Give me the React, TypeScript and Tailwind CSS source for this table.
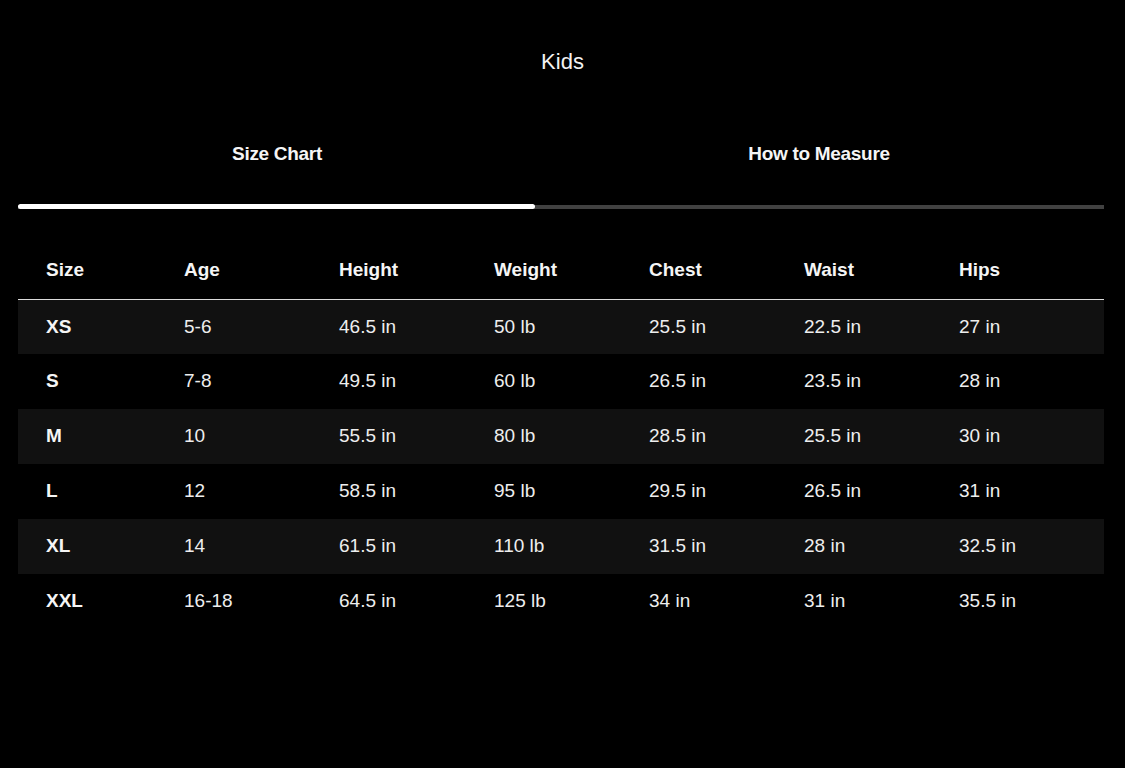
import React, { useState } from 'react'

type Row = {
    size: string
    age: string
    height: string
    weight: string
    chest: string
    waist: string
    hips: string
}

const rows: Row[] = [
    { size: 'XS', age: '5-6', height: '46.5 in', weight: '50 lb', chest: '25.5 in', waist: '22.5 in', hips: '27 in' },
    { size: 'S', age: '7-8', height: '49.5 in', weight: '60 lb', chest: '26.5 in', waist: '23.5 in', hips: '28 in' },
    { size: 'M', age: '10', height: '55.5 in', weight: '80 lb', chest: '28.5 in', waist: '25.5 in', hips: '30 in' },
    { size: 'L', age: '12', height: '58.5 in', weight: '95 lb', chest: '29.5 in', waist: '26.5 in', hips: '31 in' },
    { size: 'XL', age: '14', height: '61.5 in', weight: '110 lb', chest: '31.5 in', waist: '28 in', hips: '32.5 in' },
    { size: 'XXL', age: '16-18', height: '64.5 in', weight: '125 lb', chest: '34 in', waist: '31 in', hips: '35.5 in' },
]

const headers = ['Size', 'Age', 'Height', 'Weight', 'Chest', 'Waist', 'Hips']

const App: React.FC = () => {
    const [tab, setTab] = useState<'chart' | 'measure'>('chart')

    return (
        <div className="min-h-[768px] bg-black text-white font-['Liberation_Sans',Arial,sans-serif]">
            <h1 className="pt-[49px] text-center text-[22px] leading-[26px] text-[#f2f2f2]">Kids</h1>

            <div className="ml-[18px] mr-[21px] mt-[65px]">
                {/* tabs */}
                <div className="flex">
                    <button
                        onClick={() => setTab('chart')}
                        className="w-[518px] h-[26px] text-[19px] font-bold tracking-[-0.3px] text-[#f5f5f5]"
                    >
                        Size Chart
                    </button>
                    <button
                        onClick={() => setTab('measure')}
                        className="w-[566px] h-[26px] text-[19px] font-bold tracking-[-0.3px] text-[#f5f5f5]"
                    >
                        How to Measure
                    </button>
                </div>
                <div className="mt-[39px] h-[4px] bg-[#414141] flex">
                    <div
                        className={
                            tab === 'chart'
                                ? 'w-[517px] h-[5px] -mt-[1px] rounded-full bg-white'
                                : 'ml-[518px] flex-1 h-[5px] -mt-[1px] rounded-full bg-white'
                        }
                    />
                </div>

                {/* table */}
                <table className="mt-[33px] w-full border-collapse text-[19px]">
                    <thead>
                        <tr className="border-b border-[#dcdcdc]">
                            {headers.map((h, i) => (
                                <th
                                    key={h}
                                    className={
                                        'h-[57px] pl-[28px] text-left font-bold text-[#f5f5f5] ' +
                                        (i === 0 ? 'w-[138px]' : i === 6 ? 'w-[173px]' : 'w-[155px]')
                                    }
                                >
                                    {h}
                                </th>
                            ))}
                        </tr>
                    </thead>
                    <tbody>
                        {rows.map((r, i) => (
                            <tr key={r.size} className={i % 2 === 0 ? 'bg-[#111111]' : 'bg-black'}>
                                <td className="h-[55px] pl-[28px] font-bold text-[#f5f5f5]">{r.size}</td>
                                <td className="pl-[28px] text-[#eeeeee]">{r.age}</td>
                                <td className="pl-[28px] text-[#eeeeee]">{r.height}</td>
                                <td className="pl-[28px] text-[#eeeeee]">{r.weight}</td>
                                <td className="pl-[28px] text-[#eeeeee]">{r.chest}</td>
                                <td className="pl-[28px] text-[#eeeeee]">{r.waist}</td>
                                <td className="pl-[28px] text-[#eeeeee]">{r.hips}</td>
                            </tr>
                        ))}
                    </tbody>
                </table>
            </div>
        </div>
    )
}

export default App
